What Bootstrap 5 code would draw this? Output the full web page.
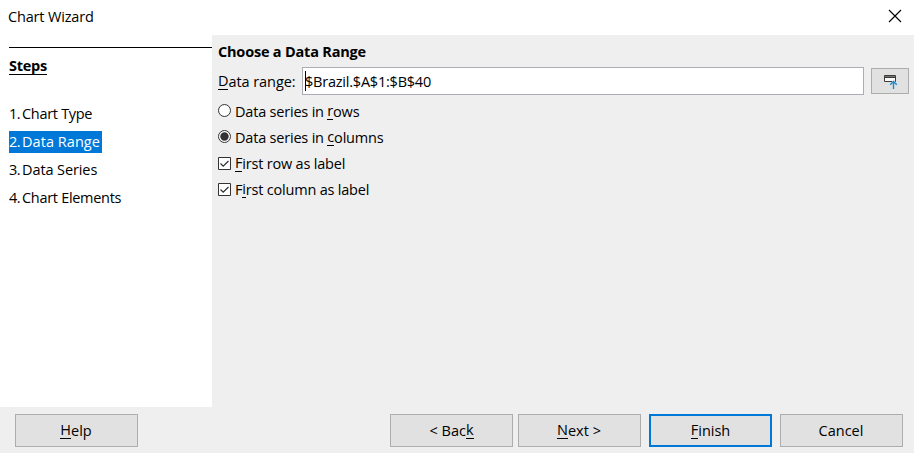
<!DOCTYPE html>
<html lang="en">
<head>
<meta charset="utf-8">
<title>Chart Wizard</title>
<link href="https://cdn.jsdelivr.net/npm/bootstrap@5.3.0/dist/css/bootstrap.min.css" rel="stylesheet">
<style>
body{font-family:"Open Sans","Noto Sans",sans-serif;font-size:14.5px;line-height:20px;letter-spacing:-.17px;color:#000;white-space:nowrap}
.mnemonic{display:inline-block;line-height:17px;height:18px;border-bottom:1px solid #000;vertical-align:top}
.titlebar{height:35px;padding:7px 12px 0 8px}
.titlebar svg{margin-top:2px}
.sidebar{width:212px;padding:12px 0 0 9px}
.steps-title{border-top:1px solid #000;padding-top:9px;height:56px;font-weight:700;letter-spacing:-.25px}
.step{height:28px}
.step-label{height:22px;display:inline-flex;align-items:center;padding-right:2px;letter-spacing:-.3px}
.series{letter-spacing:-.1px}
.num{width:13px;letter-spacing:-.5px}
.step-label.active{background:#0078d7;color:#fff;letter-spacing:.05px}
.pane,.footer-bar{background:#efefef}
.pane{padding:7px 5px 0 6px}
.heading{letter-spacing:-.2px;height:25px}
.range-row{height:28px}
.range-row label,.range-value{padding-top:2px}
.range-row label{width:77px;letter-spacing:-.07px}
.range-value{letter-spacing:-.22px}
.range-input{border:1px solid #abadb3;height:28px;margin:0 7px;padding-left:2px;background:#fff}
.caret{width:1px;height:20px;background:#000;margin-right:-1px}
.wiz-btn{--bs-btn-border-radius:0;--bs-btn-bg:#e1e1e1;--bs-btn-border-color:#adadad;--bs-btn-padding-y:0;--bs-btn-padding-x:0;--bs-btn-color:#000;--bs-btn-font-size:14.5px;width:123px;height:33px;line-height:20px;padding-right:1px}
.wiz-btn.primary{border:2px solid #0078d7;padding-right:0}
.wiz-btn.back{margin-right:5px;padding-right:0}
.pick{width:38px;height:26px;padding-right:0}
.opt{height:26px;letter-spacing:-.2px}
.opt svg{margin:0 4px 2px 0}
.opt .radio-mark{margin-bottom:3px}
.footer-bar{height:46px;padding:7px 11px 0 15px}
</style>
<script src="https://cdn.jsdelivr.net/npm/bootstrap@5.3.0/dist/js/bootstrap.bundle.min.js"></script>
</head>
<body class="vh-100 overflow-hidden d-flex flex-column bg-white">
<header class="titlebar d-flex justify-content-between align-items-start">
  <span>Chart Wizard</span>
  <svg width="14" height="14" viewBox="0 0 14 14" stroke="#000" stroke-width="1.15"><path d="M1 1l12 12M13 1L1 13"/></svg>
</header>
<main class="d-flex flex-grow-1">
  <nav class="sidebar flex-shrink-0">
    <div class="steps-title"><span class="mnemonic">Steps</span></div>
    <div class="step"><span class="step-label"><span class="num">1.</span>Chart Type</span></div>
    <div class="step"><span class="step-label active"><span class="num">2.</span>Data Range</span></div>
    <div class="step"><span class="step-label"><span class="num">3.</span><span class="series">Data Series</span></span></div>
    <div class="step"><span class="step-label"><span class="num">4.</span>Chart Elements</span></div>
  </nav>
  <section class="pane flex-grow-1">
    <div class="heading fw-bold">Choose a Data Range</div>
    <div class="range-row d-flex align-items-center">
      <label><span class="mnemonic">D</span>ata range:</label>
      <div class="range-input flex-grow-1 d-flex align-items-center"><span class="caret"></span><span class="range-value">$Brazil.$A$1:$B$40</span></div>
      <button class="btn wiz-btn pick d-flex align-items-center justify-content-center" aria-label="Select data range">
        <svg width="16" height="16" viewBox="0 0 16 16"><path fill="#fafafa" stroke="#3a3a38" d="M2.500 2.500h11v6h-11z"/><path fill="#797774" d="M3 3h10v1H3z"/><path stroke="#3a3a38" d="M2 4.500h12"/><path stroke="#e1e1e1" stroke-width="3" d="M11.500 16V7.500"/><path fill="none" stroke="#1e8bcd" stroke-width="1.400" d="M11.500 16V8M8.200 11.700L11.500 8.400l3.300 3.300"/></svg>
      </button>
    </div>
    <div class="opt d-flex align-items-center mt-1"><svg class="radio-mark" width="13" height="13" viewBox="0 0 13 13"><circle cx="6.500" cy="6.500" r="6" fill="#fff" stroke="#333"/></svg><label>Data series in <span class="mnemonic">r</span>ows</label></div>
    <div class="opt d-flex align-items-center"><svg class="radio-mark" width="13" height="13" viewBox="0 0 13 13"><circle cx="6.500" cy="6.500" r="6" fill="#fff" stroke="#333"/><circle cx="6.500" cy="6.500" r="4.200" fill="#333"/></svg><label>Data series in <span class="mnemonic">c</span>olumns</label></div>
    <div class="opt d-flex align-items-center"><svg width="13" height="13" viewBox="0 0 13 13"><path fill="#fff" stroke="#333" d="M.5.5h12v12H.5z"/><path fill="none" stroke="#333" stroke-width="1.300" d="M2.500 6.500l2.700 2.700L10.500 4"/></svg><label><span class="mnemonic">F</span>irst row as label</label></div>
    <div class="opt d-flex align-items-center"><svg width="13" height="13" viewBox="0 0 13 13"><path fill="#fff" stroke="#333" d="M.5.5h12v12H.5z"/><path fill="none" stroke="#333" stroke-width="1.300" d="M2.500 6.500l2.700 2.700L10.500 4"/></svg><label>F<span class="mnemonic">i</span>rst column as label</label></div>
  </section>
</main>
<footer class="footer-bar d-flex">
  <button class="btn wiz-btn me-auto"><span class="mnemonic">H</span>elp</button>
  <button class="btn wiz-btn back">&lt; Bac<span class="mnemonic">k</span></button>
  <button class="btn wiz-btn me-2"><span class="mnemonic">N</span>ext &gt;</button>
  <button class="btn wiz-btn primary me-2"><span class="mnemonic">F</span>inish</button>
  <button class="btn wiz-btn">Cancel</button>
</footer>
</body>
</html>
